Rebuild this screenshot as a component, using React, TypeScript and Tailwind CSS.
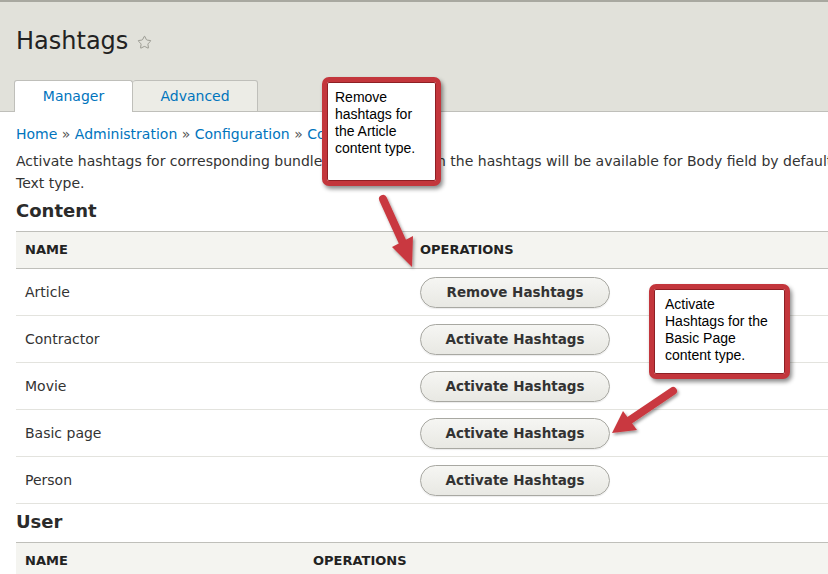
import { Star } from 'lucide-react';

const rows = [
  { name: 'Article', op: 'Remove Hashtags' },
  { name: 'Contractor', op: 'Activate Hashtags' },
  { name: 'Movie', op: 'Activate Hashtags' },
  { name: 'Basic page', op: 'Activate Hashtags' },
  { name: 'Person', op: 'Activate Hashtags' },
];

const font = { fontFamily: '"DejaVu Sans", "Lucida Grande", sans-serif' };

const Callout = ({ lines, className }: { lines: string[]; className: string }) => (
  <div
    className={`absolute rounded-[7px] border-[5px] border-[#c3363c] bg-white shadow-[2px_3px_4px_rgba(0,0,0,0.45),inset_0_0_0_1px_#8e1f24] ${className}`}
  >
    <div className="text-[14px] leading-[17px] text-black [font-family:'Liberation_Sans',Arial,sans-serif]">
      {lines.map((l) => (
        <div key={l}>{l}</div>
      ))}
    </div>
  </div>
);

const App = () => {
  return (
    <div className="relative w-[828px] h-[574px] overflow-hidden bg-white text-[#333]" style={font}>
      {/* Header */}
      <div className="border-t-2 border-[#a8a8a0] border-b border-b-[#bfbfba] bg-[#e1e1da] px-[14px] pt-[24px]">
        <div className="flex items-center gap-[9px] pl-[2px]">
          <h1 className="text-[24px] leading-[30px] font-normal text-[#222]">Hashtags</h1>
          <Star size={15} strokeWidth={1.3} className="mt-[3px] text-[#8b8b82]" />
        </div>
        <div className="mt-[24px] -mb-px flex">
          <div className="w-[119px] h-[32px] flex items-center justify-center rounded-t-[3px] border border-b-0 border-[#bfbfba] bg-white text-[14px] text-[#0074bd]">
            Manager
          </div>
          <div className="w-[125px] h-[32px] flex items-center justify-center rounded-t-[3px] border border-l-0 border-[#bfbfba] bg-[#ecece6] text-[14px] text-[#0074bd]">
            Advanced
          </div>
        </div>
      </div>

      {/* Content */}
      <div className="w-[900px] pl-[16px] pt-[11px]">
        <div className="text-[14px] leading-[22px] text-[#555]">
          <a className="text-[#0074bd]">Home</a> » <a className="text-[#0074bd]">Administration</a> »{' '}
          <a className="text-[#0074bd]">Configuration</a> » <a className="text-[#0074bd]">Content authoring</a>
        </div>
        <p className="mt-[5px] text-[14px] leading-[22px] text-[#333]">
          <span className="whitespace-nowrap">
            Activate hashtags for corresponding bundles. After activation the hashtags will be available for Body field by default with Formatted
          </span>
          <br />
          Text type.
        </p>

        <h2 className="mt-[5px] text-[18px] leading-[24px] font-bold text-[#2b2b2b]">Content</h2>
        <table className="mt-[8px] w-full border-collapse text-left">
          <thead>
            <tr className="h-[37px] border-y border-[#bfbfba] bg-[#f4f4f0]">
              <th className="w-[395px] pl-[9px] text-[13px] font-bold uppercase text-[#222]">Name</th>
              <th className="pl-[9px] text-[13px] font-bold uppercase text-[#222]">Operations</th>
            </tr>
          </thead>
          <tbody>
            {rows.map((r) => (
              <tr key={r.name} className="h-[47px] border-b border-[#e3e3de]">
                <td className="pl-[9px] text-[14px] text-[#333]">{r.name}</td>
                <td className="pl-[9px]">
                  <button className="h-[31px] w-[190px] rounded-full border border-[#a8a8a2] bg-gradient-to-b from-[#f6f6f3] to-[#e8e8e3] text-[13.5px] font-bold text-[#333] shadow-[0_1px_1px_rgba(0,0,0,0.08)]">
                    {r.op}
                  </button>
                </td>
              </tr>
            ))}
          </tbody>
        </table>

        <h2 className="mt-[6px] text-[18px] leading-[24px] font-bold text-[#2b2b2b]">User</h2>
        <table className="mt-[8px] w-full border-collapse text-left">
          <thead>
            <tr className="h-[37px] border-y border-[#bfbfba] bg-[#f4f4f0]">
              <th className="w-[288px] pl-[9px] text-[13px] font-bold uppercase text-[#222]">Name</th>
              <th className="pl-[9px] text-[13px] font-bold uppercase text-[#222]">Operations</th>
            </tr>
          </thead>
        </table>
      </div>

      {/* Annotations */}
      <Callout
        lines={['Remove', 'hashtags for', 'the Article', 'content type.']}
        className="left-[322px] top-[77px] w-[119px] h-[109px] pl-[8px] pt-[7px]"
      />
      <Callout
        lines={['Activate', 'Hashtags for the', 'Basic Page', 'content type.']}
        className="left-[649px] top-[284px] w-[141px] h-[95px] pl-[11px] pt-[7px]"
      />

      <svg className="pointer-events-none absolute inset-0" width="828" height="574">
        <defs>
          <filter id="sh" x="-20%" y="-20%" width="140%" height="140%">
            <feDropShadow dx="1.5" dy="2" stdDeviation="1.5" floodColor="#000" floodOpacity="0.4" />
          </filter>
        </defs>
        <g filter="url(#sh)">
          <line x1="383" y1="199" x2="403" y2="243" stroke="#c9393f" strokeWidth="8" strokeLinecap="round" />
          <polygon points="412,267 392,247 413,236" fill="#c9393f" />
          <line x1="673" y1="391" x2="630" y2="420" stroke="#c9393f" strokeWidth="8" strokeLinecap="round" />
          <polygon points="612,433 623,411 637,430" fill="#c9393f" />
        </g>
      </svg>
    </div>
  );
};

export default App;
